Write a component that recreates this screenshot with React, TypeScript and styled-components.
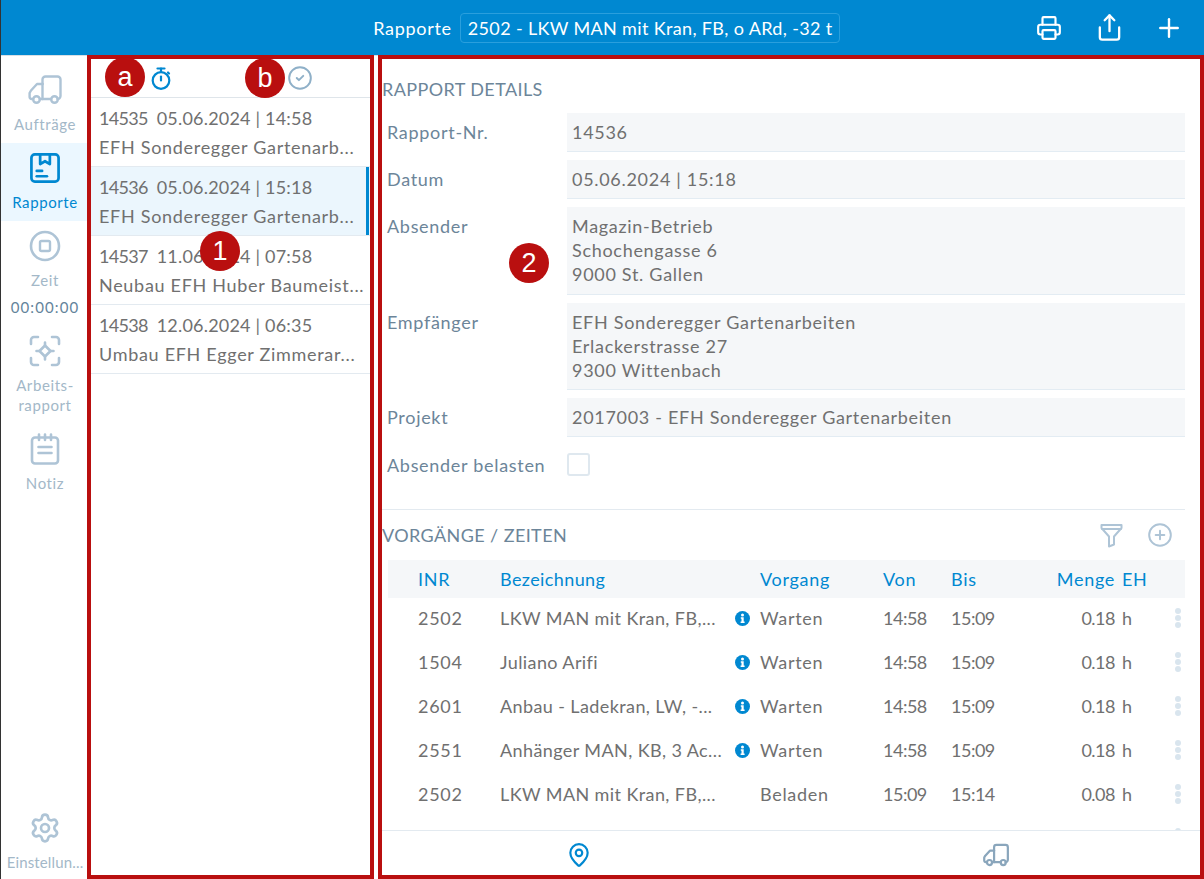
import React from 'react'
import styled, { createGlobalStyle } from 'styled-components'
import { CircleCheck, CirclePlus, MapPin, Plus, Printer, Settings, Share } from 'lucide-react'

const GlobalStyle = createGlobalStyle`
    html, body {
        margin: 0;
        padding: 0;
        background: #fff;
    }
    * {
        box-sizing: border-box;
    }
`

const RED = '#b90f0f'
const BLUE = '#0088d1'
const TEXT = '#707070'
const LABEL = '#6c8599'
const MUTED = '#a3b8c8'
const ICON = '#aec4d6'
const LINE = '#e3eaf0'

const Page = styled.div`
    width: 1204px;
    height: 879px;
    overflow: hidden;
    position: relative;
    display: flex;
    flex-direction: column;
    border-left: 1px solid #333;
    font-family: Lato, 'Liberation Sans', sans-serif;
    font-size: 18px;
    letter-spacing: 0.7px;
    color: ${TEXT};
`

const Header = styled.header`
    flex: none;
    height: 56px;
    background: ${BLUE};
    border-bottom: 1px solid #d8dfe5;
    display: grid;
    grid-template-columns: 1fr auto 1fr;
    align-items: center;
    color: #fff;
`

const HeaderTitle = styled.div`
    grid-column: 2;
    display: flex;
    align-items: center;
    gap: 8px;
    margin-left: 8px;
`

const HeaderSelect = styled.div`
    width: 380px;
    height: 30px;
    line-height: 28px;
    padding-left: 7px;
    border: 1px solid #2a9fdd;
    border-radius: 4px;
    white-space: nowrap;
    letter-spacing: 0.35px;
`

const HeaderActions = styled.div`
    display: grid;
    grid-template-columns: repeat(3, 60px);
    justify-content: end;
    justify-items: center;
    align-items: center;
    padding-right: 5px;
`

const Body = styled.div`
    flex: 1;
    display: flex;
    min-height: 0;
`

const Sidebar = styled.nav`
    flex: none;
    width: 86px;
    padding-top: 9px;
    display: flex;
    flex-direction: column;
`

const NavItem = styled.div<{ $active?: boolean; $bottom?: boolean }>`
    padding: 9px 0 ${p => (p.$bottom ? 7 : 9)}px 2px;
    margin-top: ${p => (p.$bottom ? 'auto' : 0)};
    display: flex;
    flex-direction: column;
    align-items: center;
    text-align: center;
    background: ${p => (p.$active ? '#ebf7ff' : 'transparent')};
    color: ${p => (p.$active ? BLUE : ICON)};
`

const NavLabel = styled.div<{ $active?: boolean; $tight?: boolean }>`
    margin-top: 8px;
    font-size: 15px;
    line-height: 20px;
    letter-spacing: ${p => (p.$tight ? 0.15 : 0.6)}px;
    color: ${p => (p.$active ? BLUE : MUTED)};
    white-space: nowrap;
`

const NavTime = styled.div`
    margin-top: 7px;
    font-size: 15px;
    line-height: 20px;
    letter-spacing: 1.1px;
    color: #64849b;
`

const Frame = styled.section`
    margin-top: -1px;
    border: 4px solid ${RED};
    position: relative;
    z-index: 1;
    background: #fff;
`

const ListPanel = styled(Frame)`
    flex: none;
    width: 287px;
`

const ListTools = styled.div`
    height: 39px;
    display: grid;
    grid-template-columns: 1fr 1fr;
    place-items: center;
    border-bottom: 1px solid #dfe5ea;
`

const ListRow = styled.div<{ $active?: boolean }>`
    position: relative;
    height: 69px;
    padding: 5.5px 0 0 8px;
    line-height: 29px;
    white-space: nowrap;
    background: ${p => (p.$active ? '#ebf6fd' : '#fff')};
    border-bottom: 1px solid ${LINE};

    ${p =>
        p.$active &&
        `&::after {
            content: '';
            position: absolute;
            top: 0;
            bottom: 0;
            right: 1px;
            width: 3px;
            background: ${BLUE};
        }`}
`

const RowNumbers = styled.span`
    letter-spacing: 0.2px;

    b {
        font-weight: 400;
        letter-spacing: -0.7px;
        margin-right: 9px;
    }
`

const DetailPanel = styled(Frame)`
    flex: 1;
    margin-left: 4px;
    display: flex;
    flex-direction: column;
    min-width: 0;
`

const SectionTitle = styled.h2`
    margin: 0;
    font-size: 18px;
    font-weight: 400;
    line-height: 24px;
    letter-spacing: 0.4px;
    color: ${LABEL};
    text-transform: uppercase;
`

const DetailHead = styled.div`
    padding-top: 18px;
`

const Form = styled.div`
    display: flex;
    flex-direction: column;
    gap: 8px;
    margin: 12px 15px 0 5px;
`

const FormRow = styled.div`
    display: grid;
    grid-template-columns: 180px 1fr;
`

const FormLabel = styled.div`
    padding-top: 7px;
    line-height: 24px;
    color: ${LABEL};
`

const FormValue = styled.div<{ $tall?: boolean }>`
    height: ${p => (p.$tall ? '87.5px' : '39px')};
    padding: 7px 5px;
    line-height: 24px;
    background: #f5f7f9;
    border-bottom: 1px solid #e3ecf3;
`

const CheckRow = styled(FormRow)`
    margin-top: 8px;
    align-items: center;
`

const CheckLabel = styled.div`
    line-height: 22px;
    color: ${LABEL};
`

const CheckBox = styled.div`
    width: 23px;
    height: 23px;
    border: 2px solid #dfe8ef;
    border-radius: 3px;
`

const Divider = styled.hr`
    margin: 33px 15px 0 0;
    border: 0;
    border-top: 1px solid ${LINE};
`

const TableBar = styled.div`
    height: 50px;
    display: flex;
    align-items: center;
    justify-content: space-between;
    padding-right: 27px;
`

const TableTools = styled.div`
    display: flex;
    align-items: center;
    gap: 23px;
    color: ${ICON};
`

const TableWrap = styled.div`
    flex: 1;
    min-height: 0;
    overflow: hidden;
    margin: 0 15px 0 6px;
`

const Cols = styled.div`
    display: grid;
    grid-template-columns: 30px 82px 232px 28px 123px 68px 60px 111px 48px 1fr;
    align-items: center;
    white-space: nowrap;
`

const TableHead = styled(Cols)`
    height: 38px;
    background: #f5f7f9;
    color: ${BLUE};
`

const TableRow = styled(Cols)`
    height: 44px;
    padding-bottom: 4px;
`

const Cell = styled.div<{ $col?: number; $right?: boolean; $tight?: boolean; $name?: boolean }>`
    ${p => p.$col && `grid-column: ${p.$col};`}
    ${p => p.$right && 'text-align: right; padding-right: 7px;'}
    ${p => p.$tight && 'letter-spacing: -0.5px;'}
    ${p => p.$name && 'letter-spacing: 0.4px;'}
`

const InfoCell = styled.div`
    display: flex;
    padding-left: 3px;
`

const Dots = styled.div`
    grid-column: 10;
    justify-self: center;
    display: flex;
    flex-direction: column;
    gap: 1px;

    i {
        width: 6px;
        height: 6px;
        border-radius: 50%;
        background: #d9e5ee;
    }
`

const Footer = styled.div`
    flex: none;
    height: 45px;
    padding-top: 4px;
    display: grid;
    grid-template-columns: 394px 1fr;
    place-items: center;
    border-top: 1px solid ${LINE};
    position: relative;
    background: #fff;
`

const FooterTab = styled.div<{ $active?: boolean; $shift?: boolean }>`
    display: flex;
    padding-left: ${p => (p.$shift ? 16 : 0)}px;
    color: ${p => (p.$active ? BLUE : '#8aa6bc')};
`

const Marker = styled.div<{ $x: number; $y: number }>`
    position: absolute;
    left: ${p => p.$x - 21}px;
    top: ${p => p.$y - 20}px;
    width: 40px;
    height: 40px;
    border-radius: 50%;
    background: ${RED};
    color: #fff;
    font-family: 'Liberation Sans', sans-serif;
    font-size: 27px;
    line-height: 40px;
    letter-spacing: 0;
    text-align: center;
    z-index: 2;
`

function TruckIcon({ width = 34, height = 32, stroke = 2.4 }: { width?: number; height?: number; stroke?: number }) {
    return (
        <svg width={width} height={height} viewBox="0 0 34 32" fill="none" stroke="currentColor" strokeWidth={stroke} strokeLinejoin="round" strokeLinecap="round">
            <path d="M14.5 10V5.5A3 3 0 0 1 17.5 2.5H29.5A3 3 0 0 1 32.5 5.5V22A3 3 0 0 1 29.5 25H29.8" />
            <path d="M23.2 25H11.8" />
            <path d="M14.5 10V25" />
            <path d="M14.5 10H9L3 16.5L1.6 19V23A2 2 0 0 0 3.6 25H5.2" />
            <circle cx="8.5" cy="25.5" r="3.3" />
            <circle cx="26.5" cy="25.5" r="3.3" />
        </svg>
    )
}

function ReportIcon() {
    return (
        <svg width="32" height="32" viewBox="0.5 0.5 33 33" fill="none" stroke="currentColor" strokeWidth="2.8" strokeLinejoin="round" strokeLinecap="round">
            <rect x="3" y="3" width="28" height="28" rx="3.5" />
            <path d="M12 3.5V13L17 10L22 13V3.5" />
            <path d="M8.5 20H14" />
            <path d="M8.5 25.5H19" />
        </svg>
    )
}

function StopIcon() {
    return (
        <svg width="32" height="32" viewBox="0 0 32 32" fill="none" stroke="currentColor" strokeWidth="2.6">
            <circle cx="16" cy="16" r="14" />
            <rect x="11" y="11" width="10" height="10" rx="1.5" strokeWidth="2.4" />
        </svg>
    )
}

function FocusIcon() {
    return (
        <svg width="32" height="32" viewBox="0 0 32 32" fill="none" stroke="currentColor" strokeWidth="2.6" strokeLinecap="round" strokeLinejoin="round">
            <path d="M2 9V5A3 3 0 0 1 5 2H9" />
            <path d="M23 2H27A3 3 0 0 1 30 5V9" />
            <path d="M30 23V27A3 3 0 0 1 27 30H23" />
            <path d="M9 30H5A3 3 0 0 1 2 27V23" />
            <path d="M16 10.5L21.5 16L16 21.5L10.5 16Z" />
            <path d="M16 7.5V10M16 22V24.5M7.5 16H10M22 16H24.5" />
        </svg>
    )
}

function NoteIcon() {
    return (
        <svg width="32" height="32" viewBox="0 0 32 32" fill="none" stroke="currentColor" strokeWidth="2.6" strokeLinecap="round" strokeLinejoin="round">
            <rect x="3" y="4.5" width="26" height="26" rx="3" />
            <path d="M10 1.5V7M16 1.5V7M22 1.5V7" />
            <path d="M9.5 14H22.5M9.5 20H22.5" />
        </svg>
    )
}

function InfoIcon() {
    return (
        <svg width="15" height="15" viewBox="0 0 15 15">
            <circle cx="7.5" cy="7.5" r="7.5" fill={BLUE} />
            <circle cx="7.5" cy="4" r="1.5" fill="#fff" />
            <path d="M5.8 6.3H8.7V10.6H9.6V12H5.6V10.6H6.5V7.7H5.8Z" fill="#fff" />
        </svg>
    )
}

function StopwatchIcon() {
    return (
        <svg width="22" height="24" viewBox="0 0 22 24" fill="none" stroke={BLUE} strokeWidth="2.2" strokeLinecap="round">
            <circle cx="11" cy="14.5" r="8.3" />
            <path d="M7.5 2.5H14.5" />
            <path d="M11 2.5V6" />
            <path d="M18 6.5L19 7.5" />
            <path d="M11 10.5V14.5" />
        </svg>
    )
}

function FunnelIcon() {
    return (
        <svg width="25" height="25" viewBox="0 0 25 25" fill="none" stroke="currentColor" strokeWidth="2" strokeLinejoin="round" strokeLinecap="round">
            <path d="M2.5 2H22.5V5L15 13.5V21.5L10 23.5V13.5L2.5 5Z" />
            <path d="M3 6H22" />
        </svg>
    )
}

const reports = [
    { nr: '14535', date: '05.06.2024 | 14:58', name: 'EFH Sonderegger Gartenarb...' },
    { nr: '14536', date: '05.06.2024 | 15:18', name: 'EFH Sonderegger Gartenarb...', active: true },
    { nr: '14537', date: '11.06.2024 | 07:58', name: 'Neubau EFH Huber Baumeist...' },
    { nr: '14538', date: '12.06.2024 | 06:35', name: 'Umbau EFH Egger Zimmerar...' },
]

const entries = [
    { inr: '2502', name: 'LKW MAN mit Kran, FB,...', info: true, step: 'Warten', from: '14:58', to: '15:09', qty: '0.18' },
    { inr: '1504', name: 'Juliano Arifi', info: true, step: 'Warten', from: '14:58', to: '15:09', qty: '0.18' },
    { inr: '2601', name: 'Anbau - Ladekran, LW, -...', info: true, step: 'Warten', from: '14:58', to: '15:09', qty: '0.18' },
    { inr: '2551', name: 'Anhänger MAN, KB, 3 Ac...', info: true, step: 'Warten', from: '14:58', to: '15:09', qty: '0.18' },
    { inr: '2502', name: 'LKW MAN mit Kran, FB,...', info: false, step: 'Beladen', from: '15:09', to: '15:14', qty: '0.08' },
]

export default function App() {
    return (
        <Page>
            <GlobalStyle />
            <Header>
                <HeaderTitle>
                    Rapporte
                    <HeaderSelect>2502 - LKW MAN mit Kran, FB, o ARd, -32 t</HeaderSelect>
                </HeaderTitle>
                <HeaderActions>
                    <Printer size={26} strokeWidth={2} />
                    <Share size={29} strokeWidth={1.9} />
                    <Plus size={30} strokeWidth={1.9} />
                </HeaderActions>
            </Header>
            <Body>
                <Sidebar>
                    <NavItem>
                        <TruckIcon />
                        <NavLabel>Aufträge</NavLabel>
                    </NavItem>
                    <NavItem $active>
                        <ReportIcon />
                        <NavLabel $active>Rapporte</NavLabel>
                    </NavItem>
                    <NavItem>
                        <StopIcon />
                        <NavLabel>Zeit</NavLabel>
                        <NavTime>00:00:00</NavTime>
                    </NavItem>
                    <NavItem>
                        <FocusIcon />
                        <NavLabel>
                            Arbeits-
                            <br />
                            rapport
                        </NavLabel>
                    </NavItem>
                    <NavItem>
                        <NoteIcon />
                        <NavLabel>Notiz</NavLabel>
                    </NavItem>
                    <NavItem $bottom>
                        <Settings size={32} strokeWidth={2} />
                        <NavLabel $tight>Einstellun...</NavLabel>
                    </NavItem>
                </Sidebar>

                <ListPanel>
                    <ListTools>
                        <StopwatchIcon />
                        <CircleCheck size={26} color="#8fb0c8" strokeWidth={1.8} />
                    </ListTools>
                    {reports.map(r => (
                        <ListRow key={r.nr} $active={r.active}>
                            <RowNumbers>
                                <b>{r.nr}</b>
                                {r.date}
                            </RowNumbers>
                            <br />
                            {r.name}
                        </ListRow>
                    ))}
                </ListPanel>

                <DetailPanel>
                    <DetailHead>
                        <SectionTitle>Rapport Details</SectionTitle>
                    </DetailHead>
                    <Form>
                        <FormRow>
                            <FormLabel>Rapport-Nr.</FormLabel>
                            <FormValue>14536</FormValue>
                        </FormRow>
                        <FormRow>
                            <FormLabel>Datum</FormLabel>
                            <FormValue>05.06.2024 | 15:18</FormValue>
                        </FormRow>
                        <FormRow>
                            <FormLabel>Absender</FormLabel>
                            <FormValue $tall>
                                Magazin-Betrieb
                                <br />
                                Schochengasse 6
                                <br />
                                9000 St. Gallen
                            </FormValue>
                        </FormRow>
                        <FormRow>
                            <FormLabel>Empfänger</FormLabel>
                            <FormValue $tall>
                                EFH Sonderegger Gartenarbeiten
                                <br />
                                Erlackerstrasse 27
                                <br />
                                9300 Wittenbach
                            </FormValue>
                        </FormRow>
                        <FormRow>
                            <FormLabel>Projekt</FormLabel>
                            <FormValue>2017003 - EFH Sonderegger Gartenarbeiten</FormValue>
                        </FormRow>
                        <CheckRow>
                            <CheckLabel>Absender belasten</CheckLabel>
                            <CheckBox />
                        </CheckRow>
                    </Form>
                    <Divider />
                    <TableBar>
                        <SectionTitle>Vorgänge / Zeiten</SectionTitle>
                        <TableTools>
                            <FunnelIcon />
                            <CirclePlus size={26} strokeWidth={1.8} />
                        </TableTools>
                    </TableBar>
                    <TableWrap>
                        <TableHead>
                            <Cell $col={2}>INR</Cell>
                            <Cell $name>Bezeichnung</Cell>
                            <Cell $col={5}>Vorgang</Cell>
                            <Cell>Von</Cell>
                            <Cell>Bis</Cell>
                            <Cell $right>Menge</Cell>
                            <Cell>EH</Cell>
                        </TableHead>
                        {entries.map((e, i) => (
                            <TableRow key={i}>
                                <Cell $col={2}>{e.inr}</Cell>
                                <Cell $name>{e.name}</Cell>
                                <InfoCell>{e.info && <InfoIcon />}</InfoCell>
                                <Cell>{e.step}</Cell>
                                <Cell $tight>{e.from}</Cell>
                                <Cell $tight>{e.to}</Cell>
                                <Cell $right $tight>{e.qty}</Cell>
                                <Cell>h</Cell>
                                <Dots>
                                    <i />
                                    <i />
                                    <i />
                                </Dots>
                            </TableRow>
                        ))}
                        <TableRow>
                            <Dots>
                                <i />
                                <i />
                                <i />
                            </Dots>
                        </TableRow>
                    </TableWrap>
                    <Footer>
                        <FooterTab $active>
                            <MapPin size={26} strokeWidth={2} />
                        </FooterTab>
                        <FooterTab $shift>
                            <TruckIcon width={26} height={24.5} stroke={2.9} />
                        </FooterTab>
                    </Footer>
                </DetailPanel>
            </Body>
            <Marker $x={125} $y={77}>a</Marker>
            <Marker $x={265} $y={78}>b</Marker>
            <Marker $x={220} $y={251}>1</Marker>
            <Marker $x={529} $y={263}>2</Marker>
        </Page>
    )
}
